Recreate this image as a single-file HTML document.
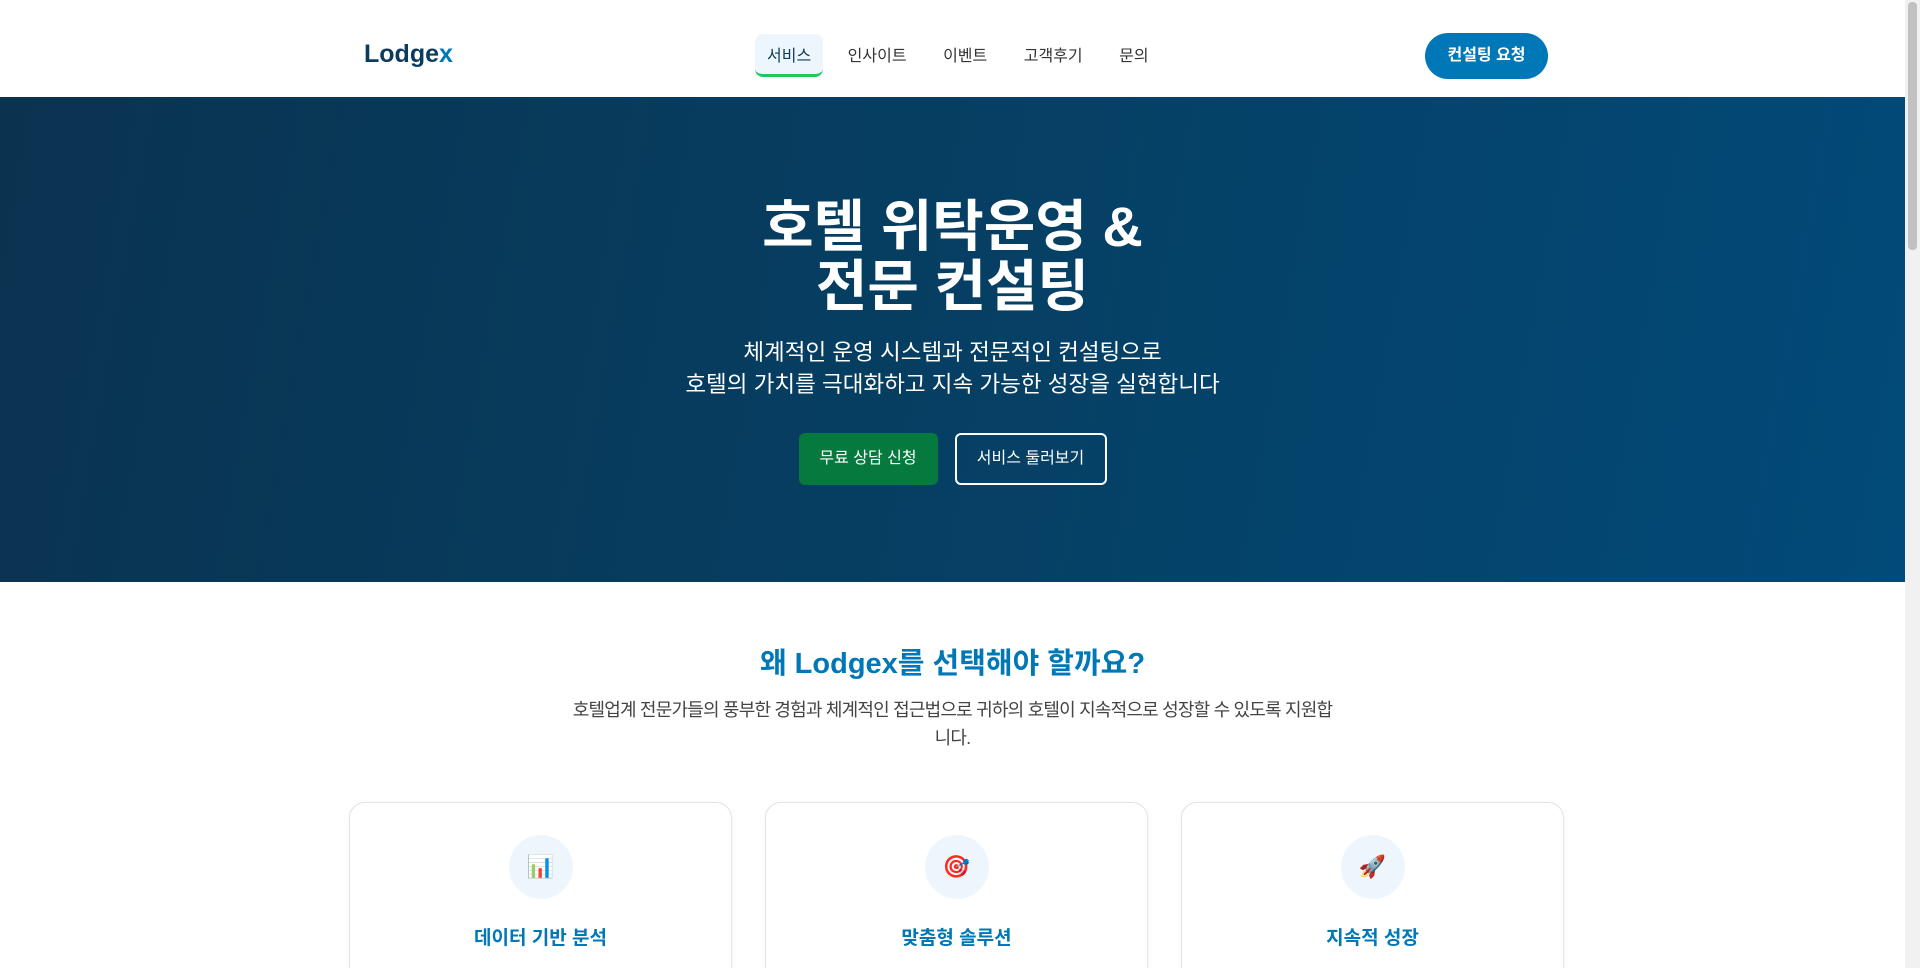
<!DOCTYPE html>
<html><head><meta charset="utf-8"><style>
*{box-sizing:border-box;margin:0;padding:0}
body{font-family:"Liberation Sans","Noto Sans CJK KR",sans-serif;background:#fff;width:1920px;height:968px;overflow:hidden;color:#333}
.wrap{width:1905px;height:968px;overflow:hidden;position:relative}
.sb{position:absolute;right:0;top:0;width:15px;height:968px;background:#f1f1f1}
.sb div{position:absolute;left:3px;top:2px;width:9px;height:248px;background:#c1c1c1;border-radius:4px}
nav{height:97px;position:relative;background:#fff}
.logo{position:absolute;left:364px;top:40px;font-size:25px;font-weight:bold;color:#0b3b5e}
.logo span{color:#0077b6}
.menu{position:absolute;left:755px;top:34px;display:flex;gap:12.5px}
.menu a{font-size:16px;color:#333;padding:8px 12px;height:43px;border-radius:8px;text-decoration:none}
.menu a.on{background:#eef6fd;border-bottom:3px solid #22c55e;color:#0b3b5e}
.cta{position:absolute;left:1425px;top:33px;width:123px;height:46px;border-radius:23px;background:#0077b6;color:#fff;font-size:16px;font-weight:bold;text-align:center;line-height:46px}
.hero{height:485px;background:linear-gradient(100deg,#0a3350 0%,#063f63 50%,#024a79 100%);text-align:center;color:#fff;padding-top:100px}
.hero h1{font-size:56px;line-height:60px;font-weight:bold}
.hero p{font-size:22.5px;line-height:32px;margin-top:20px}
.btns{margin-top:32px;display:flex;justify-content:center;gap:17px}
.b1{width:139px;height:52px;background:#067a3e;border-radius:6px;line-height:52px;font-size:16px}
.b2{width:152px;height:52px;border:2px solid #fff;border-radius:6px;line-height:48px;font-size:16px}
.why{text-align:center;padding-top:58px}
.why h2{font-size:29px;color:#0077b6;font-weight:bold}
.why p{font-size:18px;line-height:28px;color:#444;width:766px;margin:14px auto 0;word-break:break-all;letter-spacing:-0.8px}
.cards{display:flex;gap:33px;position:absolute;left:349px;top:802px}
.card{width:383px;height:200px;border:1px solid #e3e3e3;border-radius:16px;text-align:center;box-shadow:0 2px 8px rgba(0,0,0,.04)}
.ic{width:64px;height:64px;border-radius:50%;background:#eef6fd;margin:32px auto 0;line-height:64px;font-size:22px}
.card h3{font-size:19px;color:#0077b6;margin-top:24px}
</style></head><body><div class="wrap">
<nav><div class="logo">Lodge<span>x</span></div>
<div class="menu"><a class="on">서비스</a><a>인사이트</a><a>이벤트</a><a>고객후기</a><a>문의</a></div>
<div class="cta">컨설팅 요청</div></nav>
<div class="hero"><h1>호텔 위탁운영 &amp;<br>전문 컨설팅</h1>
<p>체계적인 운영 시스템과 전문적인 컨설팅으로<br>호텔의 가치를 극대화하고 지속 가능한 성장을 실현합니다</p>
<div class="btns"><div class="b1">무료 상담 신청</div><div class="b2">서비스 둘러보기</div></div></div>
<div class="why"><h2>왜 Lodgex를 선택해야 할까요?</h2>
<p>호텔업계 전문가들의 풍부한 경험과 체계적인 접근법으로 귀하의 호텔이 지속적으로 성장할 수 있도록 지원합니다.</p></div>
<div class="cards">
<div class="card"><div class="ic">📊</div><h3>데이터 기반 분석</h3></div>
<div class="card"><div class="ic">🎯</div><h3>맞춤형 솔루션</h3></div>
<div class="card"><div class="ic">🚀</div><h3>지속적 성장</h3></div>
</div>
</div><div class="sb"><div></div></div></body></html>
